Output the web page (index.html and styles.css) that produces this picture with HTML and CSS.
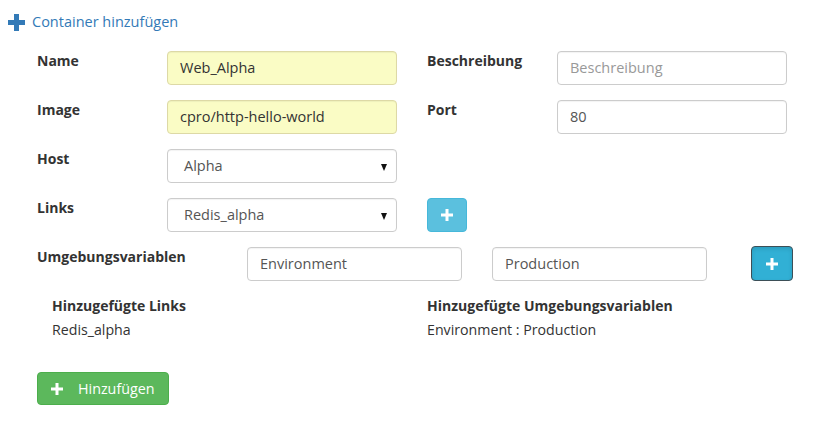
FILE: index.html
```html
<!DOCTYPE html>
<html>
<head>
<meta charset="utf-8">
<link rel="stylesheet" href="styles.css">
</head>
<body>
<div class="page">
  <a class="add-link" href="#">
    <svg class="big-plus" width="17" height="17" viewBox="0 0 17 17"><path d="M6 0h5v6h6v5h-6v6H6v-6H0V6h6z" fill="#337ab7"/></svg>
    <span>Container hinzufügen</span>
  </a>
  <div class="form">
    <div class="grid">
      <label class="lbl">Name</label>
      <div class="field filled">Web_Alpha</div>
      <label class="lbl">Beschreibung</label>
      <div class="field placeholder">Beschreibung</div>

      <label class="lbl">Image</label>
      <div class="field filled">cpro/http-hello-world</div>
      <label class="lbl">Port</label>
      <div class="field">80</div>

      <label class="lbl">Host</label>
      <div class="field select">Alpha<span class="caret"></span></div>
      <div></div><div></div>

      <label class="lbl">Links</label>
      <div class="field select">Redis_alpha<span class="caret"></span></div>
      <div class="btn-cell"><button class="btn-info"><svg width="12" height="12" viewBox="0 0 12 12"><path d="M4.5 0h3v4.5H12v3H7.5V12h-3V7.5H0v-3h4.5z" fill="#fff"/></svg></button></div>
      <div></div>
    </div>
    <div class="env-row">
      <label class="lbl env-lbl">Umgebungsvariablen</label>
      <div class="field env-field">Environment</div>
      <div class="field env-field">Production</div>
      <button class="btn-info active"><svg width="12" height="12" viewBox="0 0 12 12"><path d="M4.5 0h3v4.5H12v3H7.5V12h-3V7.5H0v-3h4.5z" fill="#fff"/></svg></button>
    </div>
    <div class="added">
      <div class="added-col first">
        <div class="added-title">Hinzugefügte Links</div>
        <div class="added-item">Redis_alpha</div>
      </div>
      <div class="added-col">
        <div class="added-title">Hinzugefügte Umgebungsvariablen</div>
        <div class="added-item">Environment : Production</div>
      </div>
    </div>
    <button class="btn-success"><svg width="12" height="12" viewBox="0 0 12 12"><path d="M4.5 0h3v4.5H12v3H7.5V12h-3V7.5H0v-3h4.5z" fill="#fff"/></svg><span>Hinzufügen</span></button>
  </div>
</div>
</body>
</html>
```
FILE: styles.css
```css
* { box-sizing: border-box; }
html, body { margin: 0; padding: 0; background: #fff; }
body {
  font-family: "Open Sans", "DejaVu Sans", sans-serif;
  font-size: 14px;
  line-height: 20px;
  color: #333;
}
.page { padding: 12px 0 0 8px; }
.add-link {
  display: flex;
  align-items: center;
  gap: 7px;
  color: #337ab7;
  text-decoration: none;
  height: 20px;
  font-size: 14.5px;
}
.big-plus { display: block; margin-top: 1px; }
.form { padding: 19px 0 0 29px; }
.grid {
  display: grid;
  grid-template-columns: 130px 230px 130px 230px;
  column-gap: 0;
  row-gap: 15px;
  width: 750px;
}
.grid > :nth-child(4n+4) { margin-left: 30px; }
.grid > :nth-child(4n+3) { margin-left: 30px; }
.lbl {
  font-weight: 700;
  color: #333;
  line-height: 20px;
}
.field {
  position: relative;
  height: 34px;
  border: 1px solid #ccc;
  border-radius: 4px;
  padding: 6px 12px;
  color: #555;
  background: #fff;
  line-height: 20px;
  font-size: 14.5px;
  box-shadow: inset 0 1px 1px rgba(0,0,0,0.05);
}
.field.filled { background: #fafcc5; border-color: #ddd9a6; color: #333; }
.field.placeholder { color: #999; }
.field.select { padding-left: 16px; }
.caret {
  position: absolute;
  right: 9px;
  top: 14px;
  width: 0;
  height: 0;
  border-left: 3.5px solid transparent;
  border-right: 3.5px solid transparent;
  border-top: 7px solid #111;
}
.grid > :nth-child(4n+2) { width: 230px; }
.grid > .field:nth-child(4n+4) { width: 230px; }
.btn-cell { display: flex; }
.btn-info {
  width: 40px;
  height: 34px;
  border: 1px solid #46b8da;
  border-radius: 4px;
  background: #5bc0de;
  display: flex;
  align-items: center;
  justify-content: center;
  padding: 0;
}
.env-row {
  display: flex;
  align-items: flex-start;
  margin-top: 15px;
  height: 35px;
}
.env-lbl { width: 210px; }
.env-field { width: 215px; }
.env-field + .env-field { margin-left: 30px; }
.btn-info.active {
  width: 42px;
  height: 35px;
  margin-left: 44px;
  margin-top: -1px;
  background: #31b0d5;
  border-color: #3d4f57;
  box-shadow: inset 0 2px 4px rgba(0,0,0,0.12);
}
.added {
  display: flex;
  margin-top: 14px;
}
.added-col { width: 390px; }
.added-col.first { padding-left: 15px; }
.added-title { font-weight: 700; line-height: 20px; }
.added-item { margin-top: 4px; line-height: 20px; font-size: 14.2px; }
.btn-success {
  margin-top: 32px;
  width: 132px;
  height: 33px;
  border: 1px solid #4cae4c;
  border-radius: 4px;
  background: #5cb85c;
  color: #fff;
  font-family: "Open Sans", "DejaVu Sans", sans-serif;
  font-size: 14.3px;
  display: flex;
  align-items: center;
  padding: 0 0 0 13px;
  gap: 15px;
}
```
